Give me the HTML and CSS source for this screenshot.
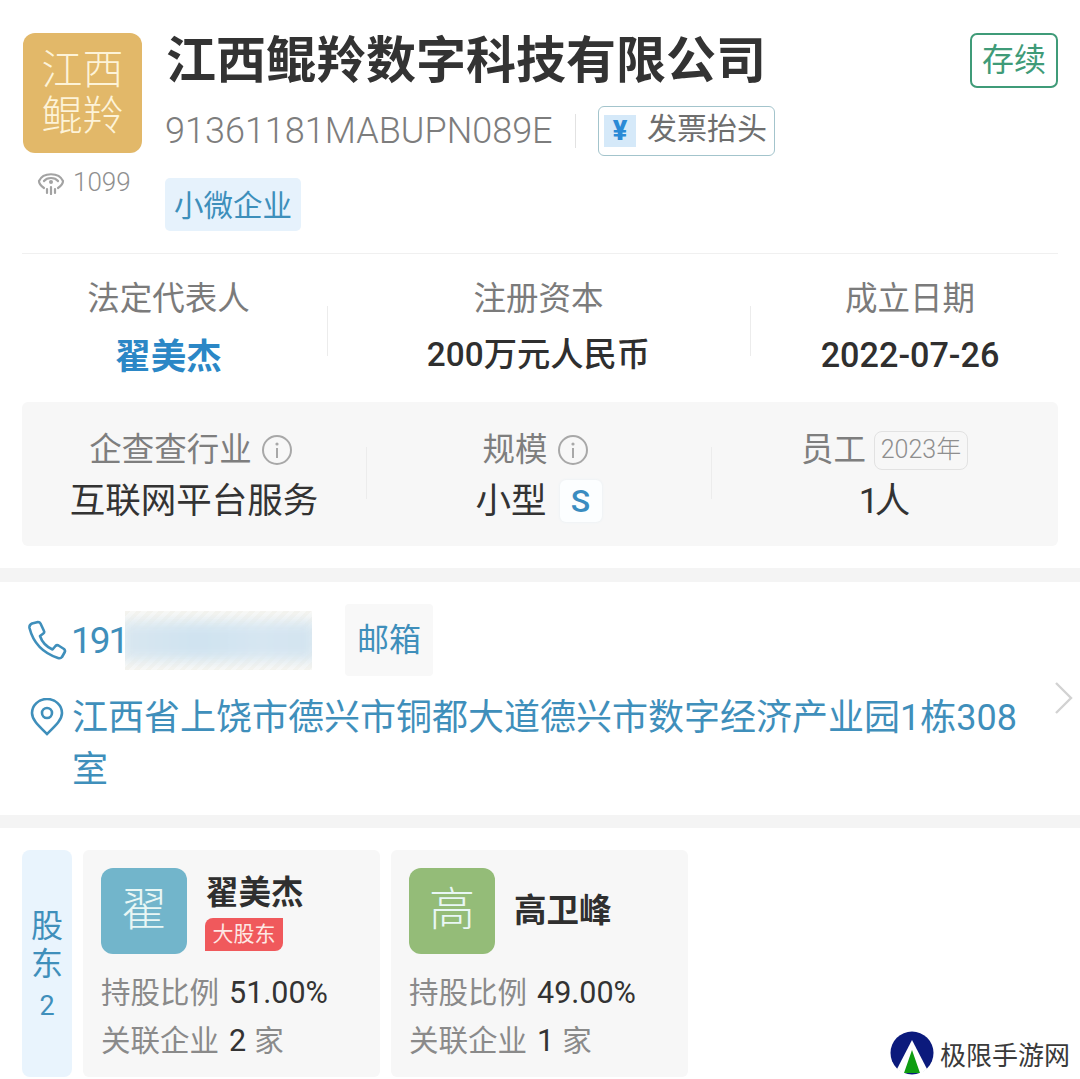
FILE: index.html
```html
<!DOCTYPE HTML>
<html>
	<head>
	<meta charset="utf-8">
	<title>江西鲲羚数字科技有限公司</title>
	<link rel="stylesheet" href="styles.css">
	</head>
	<body>
		<section class="top">
			<div class="head">
				<div class="head-left">
					<div class="logo">江西<br>鲲羚</div>
					<div class="views">
						<svg class="view-icon" width="28" height="26" viewBox="0 0 28 26" fill="none" stroke="#a3a3a3" stroke-width="2.2" stroke-linecap="round">
							<path d="M7 19 C4 17 2 14 2 12 C6 3 22 3 26 12 C26 14 24 17 21 19"/>
							<path d="M7 12 C10 8 18 8 21 12"/>
							<circle cx="14" cy="13" r="2" fill="#a3a3a3" stroke="none"/>
							<path d="M10 20v4M14 18v7M18 20v4"/>
						</svg>
						<span>1099</span>
					</div>
				</div>
				<div class="head-main">
					<div class="title-row">
						<h1 class="title">江西鲲羚数字科技有限公司</h1>
						<span class="status">存续</span>
					</div>
					<div class="code-row">
						<span class="code">91361181MABUPN089E</span>
						<span class="code-line"></span>
						<span class="invoice">
							<span class="yen">¥</span>
							<span class="invoice-text">发票抬头</span>
						</span>
					</div>
					<span class="tag">小微企业</span>
				</div>
			</div>

			<div class="facts">
				<div class="fact fact-a">
					<div class="fact-label">法定代表人</div>
					<div class="fact-person">翟美杰</div>
				</div>
				<div class="fact fact-b">
					<div class="fact-label">注册资本</div>
					<div class="fact-value">200万元人民币</div>
				</div>
				<div class="fact fact-c">
					<div class="fact-label">成立日期</div>
					<div class="fact-value fact-date">2022-07-26</div>
				</div>
			</div>

			<div class="graybox">
				<div class="gray-col gray-a">
					<div class="gray-label gray-tip">企查查行业
						<svg class="info" width="32" height="32" viewBox="0 0 32 32" fill="none" stroke="#a8a8a8" stroke-width="2"><circle cx="16" cy="16" r="14"/><circle cx="16" cy="10" r="1.6" fill="#a8a8a8" stroke="none"/><path d="M16 14v10"/></svg>
					</div>
					<div class="gray-value">互联网平台服务</div>
				</div>
				<div class="gray-col gray-b">
					<div class="gray-label gray-tip">规模
						<svg class="info" width="32" height="32" viewBox="0 0 32 32" fill="none" stroke="#a8a8a8" stroke-width="2"><circle cx="16" cy="16" r="14"/><circle cx="16" cy="10" r="1.6" fill="#a8a8a8" stroke="none"/><path d="M16 14v10"/></svg>
					</div>
					<div class="gray-value">小型<span class="size-s">S</span></div>
				</div>
				<div class="gray-col gray-c">
					<div class="gray-label">员工<span class="year">2023年</span></div>
					<div class="gray-value gray-count">1人</div>
				</div>
			</div>
		</section>

		<section class="contact">
			<div class="phone-row">
				<svg class="phone-icon" width="40" height="40" viewBox="0 0 40 40" fill="none" stroke="#3f8fbb" stroke-width="2.6" stroke-linejoin="round">
					<path d="M5 3.5 L11 2 C12 2 13 2.500 13.500 3.500 L17 11 C17.500 12 17 13 16 13.800 L13 16 C15 22 20 27 25.500 29.500 L28.500 26 C29.500 25 30.500 25 31.500 25.500 L37 29 C38 30 38.300 31 37.800 32 L35 37 C34 38.300 32.500 38.500 31 38 C16 33 6 22 2.500 8 C2.200 6 3 4.500 5 3.500 Z"/>
				</svg>
				<span class="phone-num">191</span>
				<span class="blur-box"><span class="blur-in"></span></span>
				<span class="mail">邮箱</span>
			</div>
			<div class="addr-row">
				<svg class="pin-icon" width="34" height="38" viewBox="0 0 34 38" fill="none" stroke="#3f8fbb" stroke-width="2.6">
					<path d="M17 36 C9 28 2 22 2 15 A15 14 0 0 1 32 15 C32 22 25 28 17 36 Z"/>
					<circle cx="17" cy="15" r="5"/>
				</svg>
				<div class="addr">江西省上饶市德兴市铜都大道德兴市数字经济产业园1栋308室</div>
				<svg class="chev" width="20" height="34" viewBox="0 0 20 34" fill="none" stroke="#d2d2d2" stroke-width="2.4"><path d="M2 2 L17 17 L2 32"/></svg>
			</div>
		</section>

		<section class="holders">
			<div class="holder-tab">股<br>东<div class="holder-num">2</div></div>
			<div class="holder">
				<div class="holder-top">
					<div class="avatar avatar-blue">翟</div>
					<div class="holder-who">
						<div class="holder-name">翟美杰</div>
						<span class="big-tag">大股东</span>
					</div>
				</div>
				<div class="holder-line">持股比例<b>51.00%</b></div>
				<div class="holder-line">关联企业<b>2</b>家</div>
			</div>
			<div class="holder">
				<div class="holder-top">
					<div class="avatar avatar-green">高</div>
					<div class="holder-who">
						<div class="holder-name">高卫峰</div>
					</div>
				</div>
				<div class="holder-line">持股比例<b>49.00%</b></div>
				<div class="holder-line">关联企业<b>1</b>家</div>
			</div>
		</section>

		<div class="mark">
			<svg width="44" height="44" viewBox="0 0 44 44">
				<circle cx="22" cy="22" r="21.500" fill="#0b1a7c"/>
				<path d="M22 9 L37 38 L32 42 L12 42 L7 38 Z" fill="#fff"/>
				<path d="M22 19 L30 42 L14 42 Z" fill="#0f9d12"/>
			</svg>
			<span>极限手游网</span>
		</div>
	</body>
</html>
```

FILE: styles.css
```css
* { box-sizing: border-box; }

html, body {
	margin: 0;
	padding: 0;
	background: #fff;
}

body {
	position: relative;
	height: 1079px;
	overflow: hidden;
	font-family: "Roboto", "Noto Sans CJK SC", sans-serif;
	color: #333;
}

/* top block */
.top {
	padding: 33px 22px 22px;
	border-bottom: 14px solid #f4f4f4;
	height: 582px;
}

.head {
	display: flex;
	height: 221px;
	border-bottom: 1px solid #f0f0f0;
}

.head-left {
	width: 144px;
	flex: none;
}

.logo {
	width: 119px;
	height: 120px;
	margin-left: 1px;
	background: #e2b869;
	border-radius: 12px;
	color: #fdf3d8;
	font-size: 41px;
	font-weight: 300;
	line-height: 46px;
	text-align: center;
	padding-top: 14px;
}

.views {
	display: flex;
	align-items: center;
	gap: 8px;
	margin: 14px 0 0 15px;
	font-size: 26px;
	color: #8f8f8f;
	line-height: 30px;
	font-weight: 300;
}

.head-main { flex: 1; }

.title-row {
	display: flex;
	justify-content: space-between;
	align-items: flex-start;
}

.title {
	margin: 0;
	font-size: 50px;
	font-weight: 700;
	line-height: 56px;
	color: #333;
}

.status {
	width: 88px;
	height: 55px;
	border: 2px solid #3f9b78;
	border-radius: 7px;
	color: #3f9b78;
	font-size: 32px;
	line-height: 50px;
	text-align: center;
}

.code-row {
	display: flex;
	align-items: center;
	margin-top: 17px;
}

.code {
	font-size: 36px;
	line-height: 50px;
	color: #7d7d7d;
	font-weight: 300;
	width: 409px;
	margin-left: -1px;
	margin-right: 1px;
}

.code-line {
	width: 1px;
	height: 34px;
	background: #e2e2e2;
}

.invoice {
	display: flex;
	align-items: center;
	margin-left: 22px;
	width: 177px;
	height: 50px;
	border: 1px solid #a3c4cc;
	border-radius: 6px;
	font-size: 30px;
	color: #6e6e6e;
	padding-left: 5px;
	gap: 11px;
}

.invoice-text {
	line-height: 40px;
	margin-top: -5px;
}

.yen {
	width: 32px;
	height: 32px;
	background: #d5e9f9;
	color: #2a8ad6;
	font-weight: 900;
	font-size: 27px;
	line-height: 32px;
	text-align: center;
}

.tag {
	display: inline-block;
	margin-top: 22px;
	width: 136px;
	height: 53px;
	background: #e6f2fc;
	border-radius: 5px;
	color: #3d8fbb;
	font-size: 29.500px;
	line-height: 56px;
	text-align: center;
	margin-left: -1px;
}

/* three facts */
.facts {
	display: flex;
	height: 148px;
	padding-top: 25px;
}

.fact { text-align: center; height: 90px; }
.fact-a { width: 305px; padding-right: 12px; }
.fact-b { width: 423px; }
.fact-c { width: 308px; padding-left: 12px; }

.fact-label {
	font-size: 32.500px;
	line-height: 40px;
	color: #7b7b7b;
}

.fact-person {
	margin-top: 16px;
	font-size: 35.500px;
	line-height: 44px;
	font-weight: 700;
	color: #2b87c6;
}

.fact-value {
	margin-top: 14px;
	font-size: 33.300px;
	line-height: 44px;
	font-weight: 500;
	color: #2f2f2f;
}

.fact-date { font-size: 34.200px; }

.fact-b, .fact-c { position: relative; }

.fact-b::before, .fact-c::before {
	content: "";
	position: absolute;
	left: 0;
	top: 27px;
	height: 50px;
	width: 1px;
	background: #ececec;
}

/* gray box */
.graybox {
	display: flex;
	height: 144px;
	background: #f7f7f7;
	border-radius: 6px;
	padding-top: 26px;
}

.gray-col { text-align: center; position: relative; height: 96px; }
.gray-a { width: 344px; }
.gray-b { width: 345px; }
.gray-c { width: 347px; }

.gray-b::before, .gray-c::before {
	content: "";
	position: absolute;
	left: 0;
	top: 19px;
	height: 52px;
	width: 1px;
	background: #ececec;
}

.gray-label {
	display: flex;
	justify-content: center;
	align-items: center;
	font-size: 32.500px;
	line-height: 44px;
	color: #7e7e7e;
}

.gray-tip {
	gap: 9px;
	padding-right: 6px;
}

.gray-value {
	display: flex;
	justify-content: center;
	align-items: center;
	margin-top: 6px;
	font-size: 35.500px;
	line-height: 46px;
	color: #333;
}

.gray-count {
	letter-spacing: -4px;
	padding-right: 4px;
}

.year {
	width: 94px;
	height: 39px;
	border: 1px solid #e2e2e2;
	border-radius: 8px;
	font-size: 25px;
	line-height: 36px;
	font-weight: 300;
	color: #8e8e8e;
	margin-left: 8px;
}

.size-s {
	width: 42px;
	height: 42px;
	margin-left: 13px;
	background: #fcfeff;
	border-radius: 6px;
	box-shadow: 0 0 3px #e6eef3;
	color: #3a8cc0;
	font-size: 32px;
	line-height: 42px;
	font-weight: 500;
}

/* contact */
.contact {
	height: 246px;
	border-bottom: 13px solid #f4f4f4;
	padding: 22px 22px 0;
}

.phone-row {
	display: flex;
	align-items: center;
	height: 72px;
	color: #3f8fbb;
}

.phone-icon { margin-left: 5px; }

.phone-num {
	font-size: 37px;
	letter-spacing: -2px;
	margin-left: 4px;
	width: 54px;
	font-weight: 400;
	color: #3f8fbb;
}

.blur-box {
	width: 187px;
	height: 59px;
	background: repeating-linear-gradient(135deg, #f7f5ef 0 4px, #fbfaf7 4px 8px);
	overflow: hidden;
}

.blur-in {
	display: block;
	background: linear-gradient(90deg, #d9e7f0, #cfe3f0 40%, #d6e6f1 70%, #d3e4f0);
	filter: blur(7px);
	margin: 10px -6px;
	height: 40px;
}

.mail {
	margin-left: 33px;
	width: 88px;
	height: 72px;
	background: #f8f8f8;
	border-radius: 4px;
	font-size: 32px;
	line-height: 72px;
	text-align: center;
	color: #3f8fbb;
}

.addr-row {
	position: relative;
	display: flex;
	margin-top: 16px;
}

.pin-icon { margin: 6px 0 0 8px; flex: none; }

.addr {
	width: 950px;
	margin-left: 8px;
	font-size: 36px;
	line-height: 52px;
	color: #3f8fbb;
	font-weight: 400;
}

.chev { position: absolute; right: -16px; top: -11px; }

/* shareholders */
.holders {
	display: flex;
	gap: 11px;
	padding: 22px 22px 0;
	height: 251px;
}

.holder-tab {
	width: 50px;
	height: 227px;
	background: #e9f4fd;
	border-radius: 8px;
	text-align: center;
	color: #3f8fbb;
	font-size: 32px;
	line-height: 38px;
	padding-top: 57px;
}

.holder-num {
	font-size: 27px;
	line-height: 46px;
	font-weight: 400;
}

.holder {
	width: 297px;
	height: 227px;
	background: #f7f7f7;
	border-radius: 6px;
	padding: 18px 18px 0;
}

.holder-top {
	display: flex;
	align-items: center;
	height: 86px;
	margin-bottom: 15px;
}

.avatar {
	width: 86px;
	height: 86px;
	border-radius: 12px;
	color: #e9f7f5;
	font-size: 46px;
	font-weight: 300;
	line-height: 82px;
	text-align: center;
	flex: none;
}

.avatar-blue { background: #72b5cb; }
.avatar-green { background: #94bc78; }

.holder-who { margin-left: 19px; }

.holder-name {
	font-size: 32.500px;
	line-height: 44px;
	font-weight: 700;
	color: #2f2f2f;
}

.big-tag {
	display: block;
	width: 78px;
	height: 33px;
	margin: 3px 0 1px -1px;
	background: #f0595c;
	border-radius: 8px 0 8px 0;
	color: #fde8e4;
	font-size: 21px;
	line-height: 33px;
	text-align: center;
}

.holder-line {
	font-size: 29.500px;
	line-height: 47px;
	color: #8a8a8a;
	white-space: nowrap;
}

.holder-line b {
	font-weight: 400;
	font-size: 30.500px;
	color: #333;
	margin: 0 8px 0 10px;
}

/* watermark */
.mark {
	position: absolute;
	left: 890px;
	top: 1031px;
	display: flex;
	align-items: center;
	gap: 6px;
	font-size: 26px;
	color: #3a3a3a;
}
```
